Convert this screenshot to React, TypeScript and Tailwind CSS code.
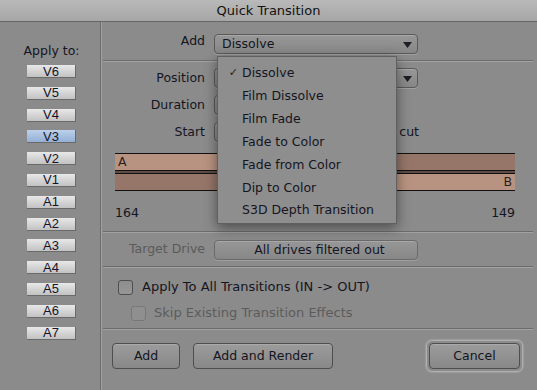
import React from 'react';

const tracks = ['V6', 'V5', 'V4', 'V3', 'V2', 'V1', 'A1', 'A2', 'A3', 'A4', 'A5', 'A6', 'A7'];
const menuItems = ['Dissolve', 'Film Dissolve', 'Film Fade', 'Fade to Color', 'Fade from Color', 'Dip to Color', 'S3D Depth Transition'];

const sep = 'border-b border-[#6c6c6c] shadow-[0_1px_0_#a2a2a2]';

const Arrow = () => (
  <svg width="9" height="6" viewBox="0 0 9 6" className="absolute right-[5px] top-[7px]">
    <path d="M0 0 H9 L4.5 6 Z" fill="#1e1e24" />
  </svg>
);

const Field = ({ className = '', children }: { className?: string; children?: React.ReactNode }) => (
  <div
    className={`relative h-[20px] rounded-[4px] border border-[#5a5a5a] bg-gradient-to-b from-[#979797] to-[#878787] shadow-[inset_0_1px_0_#a8a8a8,0_1px_0_#a0a0a0] pl-[7px] leading-[18px] text-[#15151f] ${className}`}
  >
    {children}
  </div>
);

const Button = ({ label, className = '' }: { label: string; className?: string }) => (
  <div
    className={`h-[26px] rounded-[4px] border border-[#4e4e4e] bg-gradient-to-b from-[#9c9c9c] to-[#888888] shadow-[inset_0_1px_0_#aaaaaa] flex items-center justify-center text-[#15151f] ${className}`}
  >
    {label}
  </div>
);

export default function App() {
  return (
    <div className="relative w-[537px] h-[390px] overflow-hidden bg-[#8b8b8b] text-[12.5px] text-[#15151f] font-['DejaVu_Sans',sans-serif]">
      {/* title bar */}
      <div className="h-[22px] bg-gradient-to-b from-[#b9b9b9] to-[#a6a6a6] border-b border-[#666] flex items-center justify-center text-[13px] text-[#111]">
        Quick Transition
      </div>

      <div className="flex h-[368px]">
        {/* apply to column */}
        <div className="w-[101px] shrink-0 border-r border-[#6c6c6c] shadow-[1px_0_0_#a2a2a2] flex flex-col items-center pl-[3px] pt-[22px]">
          <div className="h-[14px] leading-[14px]">Apply to:</div>
          <div className="mt-[7px] flex flex-col gap-[8.8px]">
            {tracks.map((t) => (
              <div
                key={t}
                className={`w-[49px] h-[13px] border-b border-r border-[#6a6a6a] flex items-center justify-center text-[13px] leading-[11px] text-[#141428] font-['Liberation_Sans_Narrow','Liberation_Sans',sans-serif] ${
                  t === 'V3'
                    ? 'bg-gradient-to-b from-[#bcd0ea] to-[#94b0d6]'
                    : 'bg-gradient-to-b from-[#e8e8e8] to-[#c2c2c2]'
                }`}
              >
                {t}
              </div>
            ))}
          </div>
        </div>

        {/* main panel */}
        <div className="flex-1 min-w-0 flex flex-col pl-[2px] pr-[4px]">
          <div className={`h-[39px] flex items-center ${sep}`}>
            <div className="w-[102px] text-right">Add</div>
            <Field className="ml-[9px] w-[204px] mt-[5px]">
              Dissolve
              <Arrow />
            </Field>
          </div>

          <div className={`h-[171px] flex flex-col pt-[7px] ${sep}`}>
            <div className="h-[20px] flex items-center">
              <div className="w-[102px] text-right">Position</div>
              <Field className="ml-[9px] w-[204px]">
                <Arrow />
              </Field>
            </div>
            <div className="h-[20px] mt-[7px] flex items-center">
              <div className="w-[102px] text-right">Duration</div>
              <Field className="ml-[9px] w-[60px]" />
            </div>
            <div className="h-[20px] mt-[7px] flex items-center">
              <div className="w-[102px] text-right">Start</div>
              <Field className="ml-[9px] w-[70px]" />
              <div className="ml-auto w-[110px] mr-[114px] text-right whitespace-nowrap">before cut</div>
            </div>
            <div className="ml-[12px] mr-[18px] mt-[11px]">
              <div className="h-[18px] border-y border-[#111] flex">
                <div className="w-[195px] bg-[#b99381] pl-[3px] leading-[16px] text-[#2a1e1a]">A</div>
                <div className="flex-1 bg-[#967669]" />
              </div>
              <div className="h-[2px] bg-[#5e4c45]" />
              <div className="h-[18px] border-y border-[#111] flex">
                <div className="w-[195px] bg-[#967669]" />
                <div className="flex-1 bg-[#b99381] pr-[3px] text-right leading-[16px] text-[#2a1e1a]">B</div>
              </div>
            </div>
            <div className="ml-[12px] mr-[18px] mt-[13px] flex justify-between text-[12.5px]">
              <span>164</span>
              <span>149</span>
            </div>
          </div>

          <div className={`h-[35px] flex items-center ${sep}`}>
            <div className="w-[102px] text-right text-[#5a5a5a]">Target Drive</div>
            <Field className="ml-[9px] w-[204px] mt-[2px] text-center pl-0 text-[#666] border-[#6a6a6a]">
              All drives filtered out
            </Field>
          </div>

          <div className={`h-[62px] flex flex-col pl-[15px] pt-[12px] ${sep}`}>
            <div className="flex items-center h-[16px]">
              <div className="w-[15px] h-[15px] rounded-[3px] border border-[#4e4e4e] bg-gradient-to-b from-[#8e8e8e] to-[#969696]" />
              <span className="ml-[9px] text-[13px]">Apply To All Transitions (IN -&gt; OUT)</span>
            </div>
            <div className="flex items-center h-[16px] mt-[10px] ml-[13px]">
              <div className="w-[15px] h-[15px] rounded-[3px] border border-[#777] bg-[#8f8f8f]" />
              <span className="ml-[8px] text-[13px] text-[#5c5c5c]">Skip Existing Transition Effects</span>
            </div>
          </div>

          <div className="flex-1 flex items-start pt-[14px] pl-[9px]">
            <Button label="Add" className="w-[68px]" />
            <Button label="Add and Render" className="w-[140px] ml-[13px]" />
            <div className="ml-auto mr-[10px] -mt-[3px] rounded-[6px] border border-[#b0b0b0] p-[2px] shadow-[0_0_2px_#c4c4c4]">
              <Button label="Cancel" className="w-[91px]" />
            </div>
          </div>
        </div>
      </div>

      {/* dropdown menu */}
      <div className="absolute left-[217px] top-[56px] w-[180px] h-[168px] bg-[#8e8e8e] border border-[#606060] shadow-[0_4px_12px_rgba(0,0,0,0.45)] pt-[5px] flex flex-col">
        {menuItems.map((m, i) => (
          <div key={m} className="h-[22.9px] flex items-center text-[12.5px]">
            <span className="w-[24px] text-right pr-[4px] text-[11px] text-[#222]">{i === 0 ? '✓' : ''}</span>
            <span>{m}</span>
          </div>
        ))}
      </div>
    </div>
  );
}
